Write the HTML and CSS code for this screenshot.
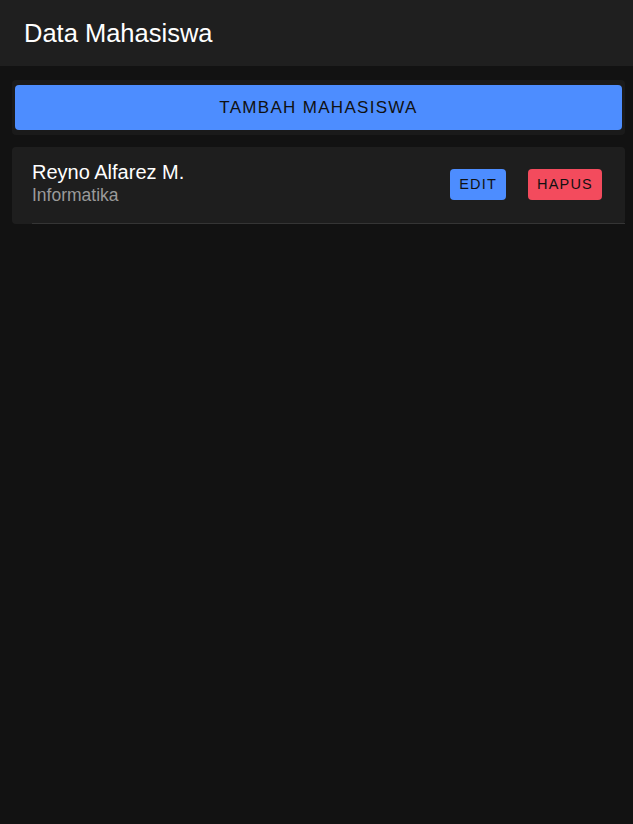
FILE: index.html
```html
<!DOCTYPE html>
<html>
<head>
<meta charset="utf-8">
<link rel="stylesheet" href="styles.css">
</head>
<body>
<header class="toolbar"><h1 class="title">Data Mahasiswa</h1></header>
<main class="content">
  <div class="card card-add">
    <button class="btn btn-primary btn-block">TAMBAH MAHASISWA</button>
  </div>
  <div class="card card-list">
    <div class="item">
      <div class="item-text">
        <div class="name">Reyno Alfarez M.</div>
        <div class="sub">Informatika</div>
      </div>
      <div class="actions">
        <button class="btn btn-small btn-primary">EDIT</button>
        <button class="btn btn-small btn-danger">HAPUS</button>
      </div>
    </div>
  </div>
</main>
</body>
</html>
```
FILE: styles.css
```css
html, body { margin: 0; padding: 0; height: 100%; }
body {
  background: #121212;
  font-family: "Liberation Sans", Arial, sans-serif;
  color: #fff;
}
.toolbar {
  height: 66px;
  background: #1f1f1f;
  display: flex;
  align-items: center;
  padding: 0 24px;
  box-sizing: border-box;
}
.title {
  margin: 0;
  font-size: 25.5px;
  font-weight: normal;
  color: #fff;
}
.content {
  padding: 14px 8px 0 12px;
  display: flex;
  flex-direction: column;
  gap: 12px;
}
.card {
  border-radius: 4px;
  box-sizing: border-box;
}
.card-add {
  background: #1a1a1a;
  padding: 5px 3px;
  height: 55px;
}
.btn {
  border: none;
  font-family: "Liberation Sans", Arial, sans-serif;
  color: #111;
  cursor: pointer;
  border-radius: 4px;
  padding: 0;
}
.btn-block {
  display: block;
  width: 100%;
  height: 45px;
  font-size: 17px;
  letter-spacing: 1.3px;
}
.btn-primary { background: #4d8dff; }
.btn-danger { background: #f34b5d; }
.card-list {
  background: #1e1e1e;
  height: 77px;
  padding-left: 20px;
}
.item {
  height: 76px;
  border-bottom: 1px solid #353535;
  display: flex;
  align-items: center;
  justify-content: space-between;
  padding-right: 23px;
}
.item-text { margin-top: -4px; }
.name { font-size: 20px; color: #fff; line-height: 24px; }
.sub { font-size: 17.5px; color: #9a9a9a; line-height: 22px; }
.actions { display: flex; gap: 22px; margin-top: -2px; }
.btn-small {
  height: 31px;
  font-size: 14.5px;
  letter-spacing: 1.2px;
  padding: 0 9px;
}
```
